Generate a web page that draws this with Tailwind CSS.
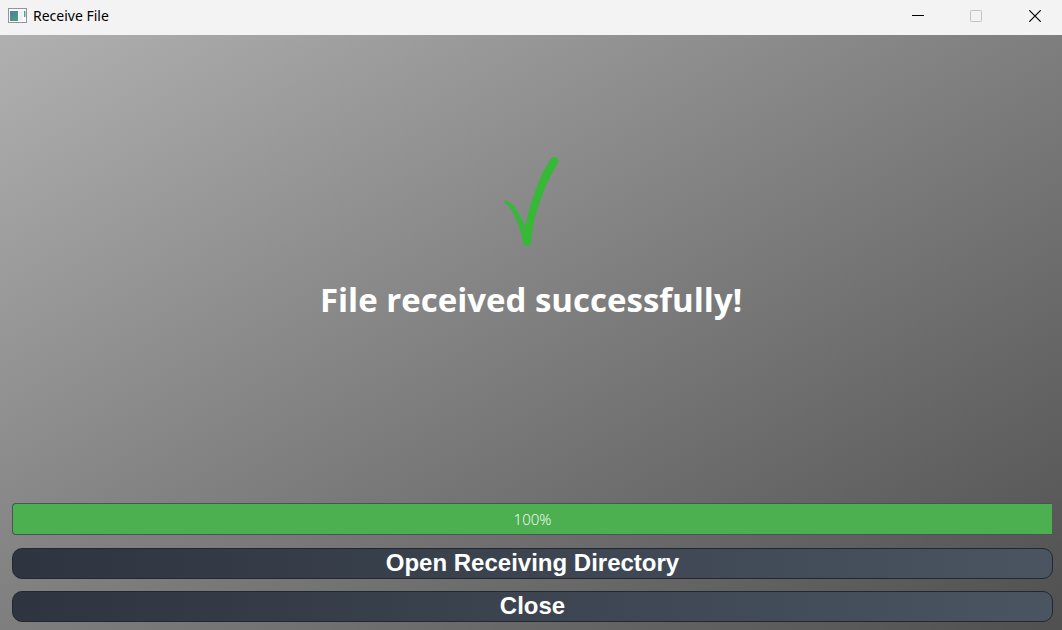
<!DOCTYPE html>
<html lang="en">
<head>
<meta charset="utf-8">
<meta name="viewport" content="width=device-width, initial-scale=1">
<title>Receive File</title>
<script src="https://cdn.jsdelivr.net/npm/@tailwindcss/browser@4"></script>
</head>
<body class="flex min-h-screen flex-col bg-[#f3f3f3] font-['Open_Sans','Noto_Sans',sans-serif]">
<header class="flex h-[35px] shrink-0 items-start justify-between bg-[#f3f3f3] text-black">
  <div class="flex h-8 items-center gap-1.5 pl-2">
    <svg class="h-4 w-[19px]" viewBox="0 0 19 16" aria-hidden="true">
      <defs><linearGradient id="pane" x1="0" y1="0" x2="0.6" y2="1"><stop offset="0" stop-color="#4a7fae"/><stop offset="1" stop-color="#4f9c79"/></linearGradient></defs>
      <rect x="0.5" y="0.5" width="18" height="14" fill="#fafafa" stroke="#92959f"/>
      <rect x="2" y="3" width="8" height="10" fill="url(#pane)"/>
      <rect x="11" y="3" width="4" height="10" fill="#eef2f0"/>
      <rect x="16" y="3" width="1.500" height="6" fill="#5d9f91"/>
    </svg>
    <h1 class="font-['Noto_Sans','Open_Sans',sans-serif] text-sm">Receive File</h1>
  </div>
  <div class="flex h-8">
    <button type="button" aria-label="Minimize" class="flex w-[58px] items-center justify-center">
      <svg class="size-3" viewBox="0 0 12 12"><path d="M0 5.5H12" stroke="#000"/></svg>
    </button>
    <button type="button" aria-label="Maximize" disabled class="flex w-[58px] items-center justify-center">
      <svg class="size-3" viewBox="0 0 12 12"><rect x="0.5" y="0.5" width="11" height="11" rx="1" fill="none" stroke="#c3c3c3"/></svg>
    </button>
    <button type="button" aria-label="Close window" class="flex w-[57px] items-center justify-center pl-[3px]">
      <svg class="size-3" viewBox="0 0 12 12"><path d="M0.3 0.3L11.7 11.7M11.7 0.3L0.3 11.7" stroke="#000" stroke-width="1.2"/></svg>
    </button>
  </div>
</header>
<main class="flex grow flex-col bg-linear-to-br from-[#b0b0b0] to-[#505050] pr-[9px] pb-2 pl-3 text-white">
  <section class="flex grow flex-col items-center justify-center gap-7 pr-[3px] pb-[58px]">
    <svg class="h-[92px] w-14" viewBox="0 0 56 92" role="img" aria-label="Success">
      <path d="M1.500 46C1 44 3 44 4 45C8 47 11 49.500 13 53C17 59 20 65 22 71C25 58 27 48 32 36C36 23 41 14 47 4C49 -0.500 56 0 55.500 5C55 8 53 10 51.500 13C46 22 42 31 39 40C34 53 30 66 28.700 81C28.500 86 28.500 90 24.500 90C21 90.500 20 87 19.700 84C17 71 13 61 7 52C5 49 3 48 1.500 46Z" fill="#35b937"/>
    </svg>
    <p class="text-center text-[33px] leading-12 font-bold">File received successfully!</p>
  </section>
  <div class="flex flex-col gap-[13px]">
    <div role="progressbar" aria-label="Transfer progress" aria-valuemin="0" aria-valuemax="100" aria-valuenow="100" class="mr-px flex h-8 items-center justify-center rounded-l-sm border border-r-0 border-[#4d5257] bg-[#4caf50] text-[15px] font-light">100%</div>
    <div class="flex flex-col gap-3">
      <button type="button" class="h-[31px] rounded-[10px] border border-[#23272e] bg-linear-to-r from-[#2e3440] to-[#4a5561] pb-px font-['Liberation_Sans',Arial,sans-serif] text-2xl leading-7 font-bold">Open Receiving Directory</button>
      <button type="button" class="h-[31px] rounded-[10px] border border-[#23272e] bg-linear-to-r from-[#2e3440] to-[#4a5561] pb-px font-['Liberation_Sans',Arial,sans-serif] text-2xl leading-7 font-bold">Close</button>
    </div>
  </div>
</main>
</body>
</html>
